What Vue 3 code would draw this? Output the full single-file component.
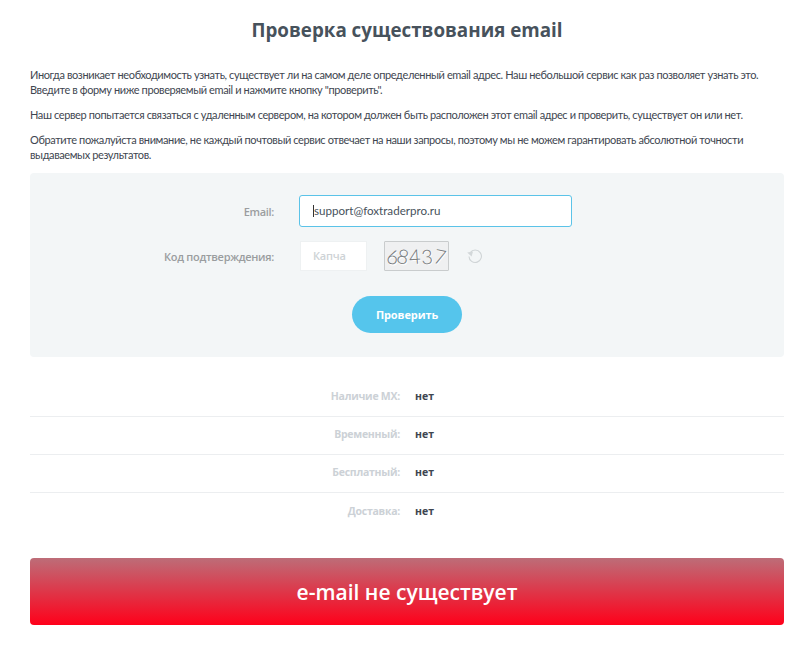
<template>
  <div class="page">
    <h1>Проверка существования email</h1>
    <p>Иногда возникает необходимость узнать, существует ли на самом деле определенный email адрес. Наш небольшой сервис как раз позволяет узнать это.<br />Введите в форму ниже проверяемый email и нажмите кнопку "проверить".</p>
    <p>Наш сервер попытается связаться с удаленным сервером, на котором должен быть расположен этот email адрес и проверить, существует он или нет.</p>
    <p>Обратите пожалуйста внимание, не каждый почтовый сервис отвечает на наши запросы, поэтому мы не можем гарантировать абсолютной точности выдаваемых результатов.</p>

    <form class="panel" @submit.prevent>
      <div class="row">
        <label>Email:</label>
        <div class="email"><i class="caret"></i>support@foxtraderpro.ru</div>
      </div>
      <div class="row captcha-row">
        <label>Код подтверждения:</label>
        <div class="captcha-input">Капча</div>
        <div class="captcha-img">
          <span v-for="d in digits" :key="d.c + d.r" class="digit" :style="{ width: d.w + 'px', transform: `rotate(${d.r}deg)` }">{{ d.c }}</span>
        </div>
        <svg class="refresh" viewBox="0 0 16 16" width="16" height="16">
          <path d="M3.2 4.6A6.2 6.2 0 1 1 2 8.4" fill="none" stroke="#cfd4d6" stroke-width="1.1" />
          <path d="M.2 4.4 4.6 8.6 6 3.4z" fill="#d3d8da" />
        </svg>
      </div>
      <button type="button">Проверить</button>
    </form>

    <div class="results">
      <div v-for="r in results" :key="r" class="result">
        <span class="name">{{ r }}:</span>
        <span class="value">нет</span>
      </div>
    </div>

    <div class="alert">e-mail не существует</div>
  </div>
</template>

<script setup>
const digits = [
  { c: "6", r: 12, w: 10 },
  { c: "8", r: 14, w: 12 },
  { c: "4", r: -4, w: 11 },
  { c: "3", r: -4, w: 14 },
  { c: "7", r: 12, w: 12 },
];

const results = ["Наличие MX", "Временный", "Бесплатный", "Доставка"];
</script>

<style>
body {
  background: #fff;
}
</style>

<style scoped>
.page {
  box-sizing: border-box;
  height: 665px;
  padding: 0 21px 0 30px;
  overflow: hidden;
  font-family: "Lato", "Roboto", sans-serif;
  font-size: 11px;
  line-height: 15px;
  color: #3e4650;
}

h1 {
  margin: 0;
  padding-top: 19px;
  height: 48px;
  line-height: 23px;
  font-family: "Open Sans", sans-serif;
  font-size: 18.8px;
  font-weight: 700;
  text-align: center;
  color: #47525c;
}

p {
  margin: 0 0 10px;
  letter-spacing: -0.38px;
}

.panel {
  display: flex;
  flex-direction: column;
  align-items: stretch;
  box-sizing: border-box;
  height: 184px;
  margin-top: 11px;
  padding: 22px 0 0;
  background: #f3f6f7;
  border-radius: 4px;
}

.row {
  display: flex;
  align-items: center;
  height: 32px;
}

label {
  width: 244px;
  margin-right: 25px;
  text-align: right;
  font-family: "Open Sans", sans-serif;
  font-size: 11px;
  font-weight: 600;
  letter-spacing: -0.3px;
  color: #9a9d9f;
}

.email {
  display: flex;
  align-items: center;
  box-sizing: border-box;
  width: 273px;
  height: 32px;
  padding: 0 0 1px 13px;
  background: #fff;
  border: 1px solid #5bc3e8;
  border-radius: 3px;
  font-family: "Lato", "Open Sans", sans-serif;
  font-size: 11.6px;
  color: #47525c;
}

.caret {
  width: 1px;
  height: 12px;
  background: #333;
}

.captcha-row {
  height: 30px;
  margin-top: 14px;
}

.captcha-input {
  box-sizing: border-box;
  width: 67px;
  height: 30px;
  margin-left: 1px;
  background: #fff;
  border: 1px solid #eef1f2;
  font-family: "Open Sans", sans-serif;
  font-size: 11px;
  font-weight: 600;
  letter-spacing: -0.2px;
  line-height: 27px;
  padding-left: 12px;
  color: #ced3d6;
}

.captcha-img {
  display: flex;
  justify-content: center;
  align-items: center;
  box-sizing: border-box;
  width: 65px;
  height: 30px;
  margin-left: 17px;
  background: #eff0f1;
  border: 1px solid #c9cccd;
  border-radius: 1px;
  font-family: "Lato", "Liberation Sans", sans-serif;
  font-size: 20px;
  font-weight: 300;
  color: #74787a;
  text-shadow: 1px 1px 0 #fff;
}

.digit {
  display: block;
  text-align: center;
}

.refresh {
  margin-left: 18px;
}

button {
  align-self: center;
  width: 110px;
  height: 37px;
  margin-top: 25px;
  padding: 0;
  border: 0;
  border-radius: 19px;
  background: #55c5ec;
  color: #fff;
  font-family: "Open Sans", sans-serif;
  font-size: 11px;
  font-weight: 700;
  letter-spacing: -0.1px;
}

.results {
  margin-top: 22px;
}

.result {
  display: flex;
  align-items: center;
  box-sizing: border-box;
  height: 38px;
  padding-bottom: 2px;
  border-bottom: 1px solid #eceef0;
}

.result:last-child {
  border-bottom: 0;
}

.name {
  width: 370px;
  text-align: right;
  font-family: "Open Sans", sans-serif;
  font-size: 10.5px;
  font-weight: 700;
  letter-spacing: -0.25px;
  color: #ccd1d6;
}

.value {
  margin-left: 15px;
  font-family: "Open Sans", sans-serif;
  font-size: 10.5px;
  font-weight: 700;
  color: #3e4650;
}

.alert {
  height: 67px;
  margin-top: 27px;
  border-radius: 4px;
  background: linear-gradient(#bd6d78, #ff001a);
  color: #fff;
  font-family: "Open Sans", sans-serif;
  font-size: 21px;
  font-weight: 600;
  line-height: 68px;
  text-align: center;
}
</style>
